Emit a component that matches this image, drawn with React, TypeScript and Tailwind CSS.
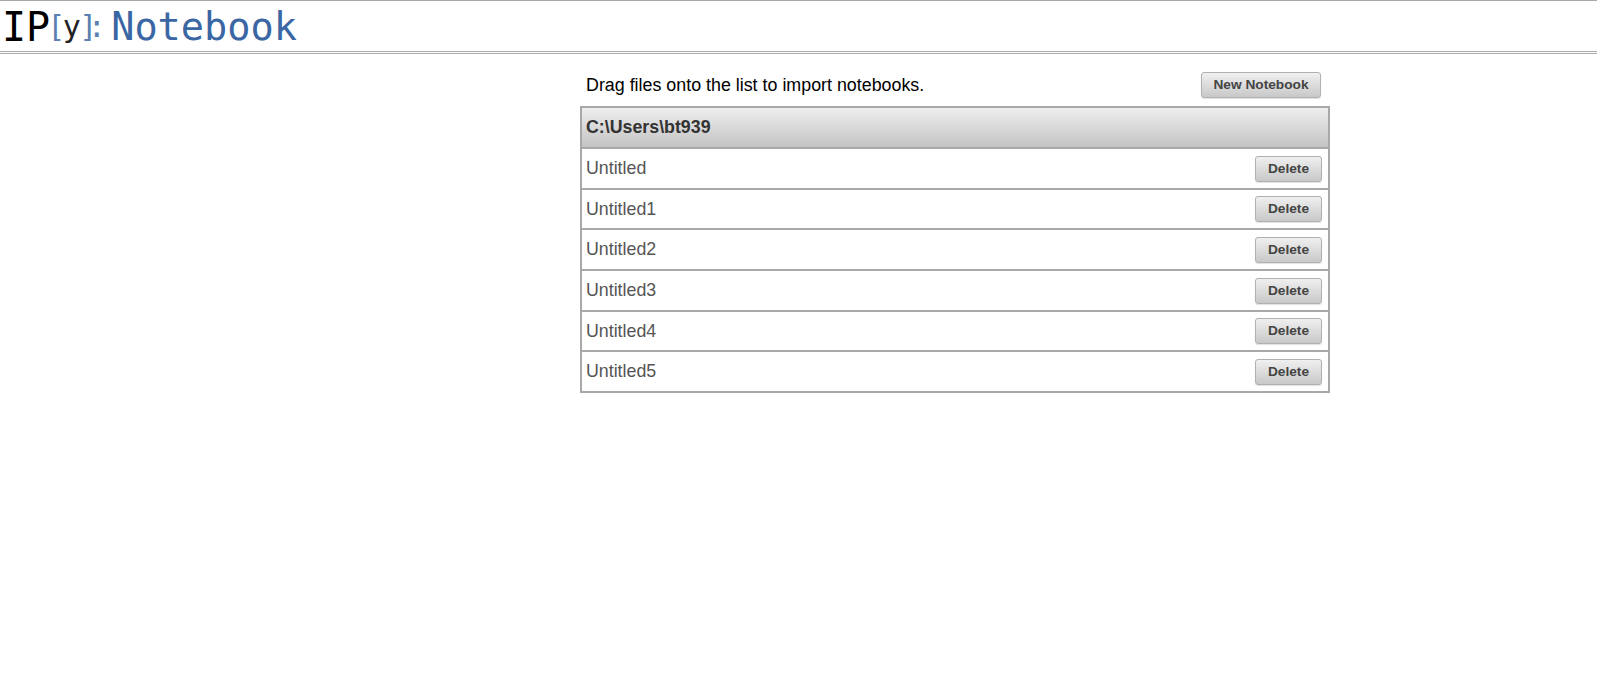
const rows = ["Untitled", "Untitled1", "Untitled2", "Untitled3", "Untitled4", "Untitled5"];
const rowHeights = ["h-[41px]", "h-[40px]", "h-[41px]", "h-[41px]", "h-[40px]", "h-[39px]"];

function Btn({ label, w }: { label: string; w: string }) {
  return (
    <button className={`${w} h-[26px] rounded-[3px] border border-[#b0b0b0] bg-gradient-to-b from-[#f0f0f0] to-[#c8c8c8] shadow-[0_1px_1px_rgba(0,0,0,0.12)] text-[13.7px] leading-none font-bold text-[#444444] [font-family:'Liberation_Sans',sans-serif] flex items-center justify-center`}>
      {label}
    </button>
  );
}

export default function App() {
  return (
    <div className="min-h-[684px] bg-white [font-family:'Liberation_Sans',Arial,sans-serif]">
      <header className="h-[54px] border-t border-[#aaaaaa] flex flex-col">
        <div className="h-[50px] flex items-center pl-[2px] pt-[2px] [font-family:'DejaVu_Sans_Mono',monospace] overflow-hidden">
          <span className="text-[40px] leading-none text-black">IP</span>
          <span className="w-[61px] shrink-0 text-[30px] leading-none text-[#5b80b2] indent-[-3px] whitespace-nowrap">
            <span className="tracking-[-2.5px]">[</span>
            <span className="text-[#222222] tracking-[-1.5px]">y</span>
            <span className="tracking-[-9.5px]">]</span>
            <span>:</span>
          </span>
          <span className="text-[38.6px] leading-none text-[#3a66a3]">Notebook</span>
        </div>
        <div className="h-[3px] border-y border-[#aaaaaa]" />
      </header>
      <main className="ml-[580px] w-[750px]">
        <div className="h-[52px] flex items-center justify-between pl-[6px] pr-[9px] pt-[10px]">
          <span className="text-[17.85px] text-black">Drag files onto the list to import notebooks.</span>
          <Btn label="New Notebook" w="w-[120px]" />
        </div>
        <div className="border-2 border-[#a8a8a8]">
          <div className="h-[39px] px-[4px] flex items-center bg-gradient-to-b from-[#eeeeee] to-[#c4c4c4] border-b-2 border-[#a8a8a8] box-content">
            <span className="text-[17.8px] font-bold text-[#333333]">C:\Users\bt939</span>
          </div>
          {rows.map((name, i) => (
            <div key={name} className={`${rowHeights[i]} flex items-center justify-between pl-[4px] pr-[6px] ${i < rows.length - 1 ? "border-b-2 border-[#a8a8a8]" : ""}`}>
              <span className="text-[17.8px] text-[#555555]">{name}</span>
              <Btn label="Delete" w="w-[67px]" />
            </div>
          ))}
        </div>
      </main>
    </div>
  );
}
